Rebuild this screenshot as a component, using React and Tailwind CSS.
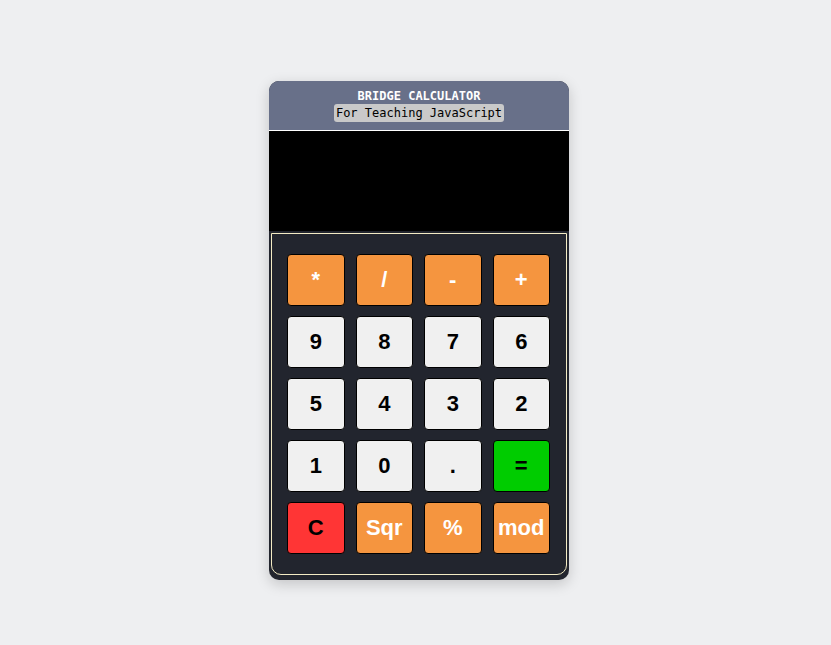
import React from 'react'

const keys = [
  { label: '*', kind: 'op' },
  { label: '/', kind: 'op' },
  { label: '-', kind: 'op' },
  { label: '+', kind: 'op' },
  { label: '9', kind: 'num' },
  { label: '8', kind: 'num' },
  { label: '7', kind: 'num' },
  { label: '6', kind: 'num' },
  { label: '5', kind: 'num' },
  { label: '4', kind: 'num' },
  { label: '3', kind: 'num' },
  { label: '2', kind: 'num' },
  { label: '1', kind: 'num' },
  { label: '0', kind: 'num' },
  { label: '.', kind: 'num' },
  { label: '=', kind: 'eq' },
  { label: 'C', kind: 'clear' },
  { label: 'Sqr', kind: 'op' },
  { label: '%', kind: 'op' },
  { label: 'mod', kind: 'op' },
]

const styles = {
  op: 'bg-[#f5953f] text-white',
  num: 'bg-[#f0f0f0] text-black',
  eq: 'bg-[#00cc00] text-black',
  clear: 'bg-[#ff3535] text-black',
}

const Key = ({ label, kind }) => (
  <button
    className={`h-[52px] rounded-[4px] border border-black font-bold text-[22px] leading-none font-['Liberation_Sans',Arial,sans-serif] ${styles[kind]}`}
  >
    {label}
  </button>
)

export default function App() {
  return (
    <div className="min-h-[645px] bg-[#eeeff1] flex justify-center pt-[81px] pl-[7px]">
      <div className="w-[300px] h-[499px] bg-[#22252e] rounded-[10px] shadow-[0_4px_14px_rgba(0,0,0,0.18)] flex flex-col overflow-hidden">
        <div className="h-[50px] bg-[#687089] border-b border-white flex flex-col items-center pt-[8px] font-['DejaVu_Sans_Mono','Liberation_Mono',monospace] text-[12px]">
          <p className="text-white font-bold leading-[15px]">BRIDGE CALCULATOR</p>
          <p className="bg-[#c9c9c9] text-black rounded-[3px] px-[2px] leading-[18px]">For Teaching JavaScript</p>
        </div>
        <div className="h-[100px] bg-black" />
        <div className="mx-[2px] mt-[2px] h-[342px] border border-[#f3ebc4] rounded-b-[10px] grid grid-cols-4 content-start gap-x-[11px] gap-y-[10px] pl-[15px] pr-[16px] pt-[20px]">
          {keys.map((k) => (
            <Key key={k.label} label={k.label} kind={k.kind} />
          ))}
        </div>
      </div>
    </div>
  )
}
